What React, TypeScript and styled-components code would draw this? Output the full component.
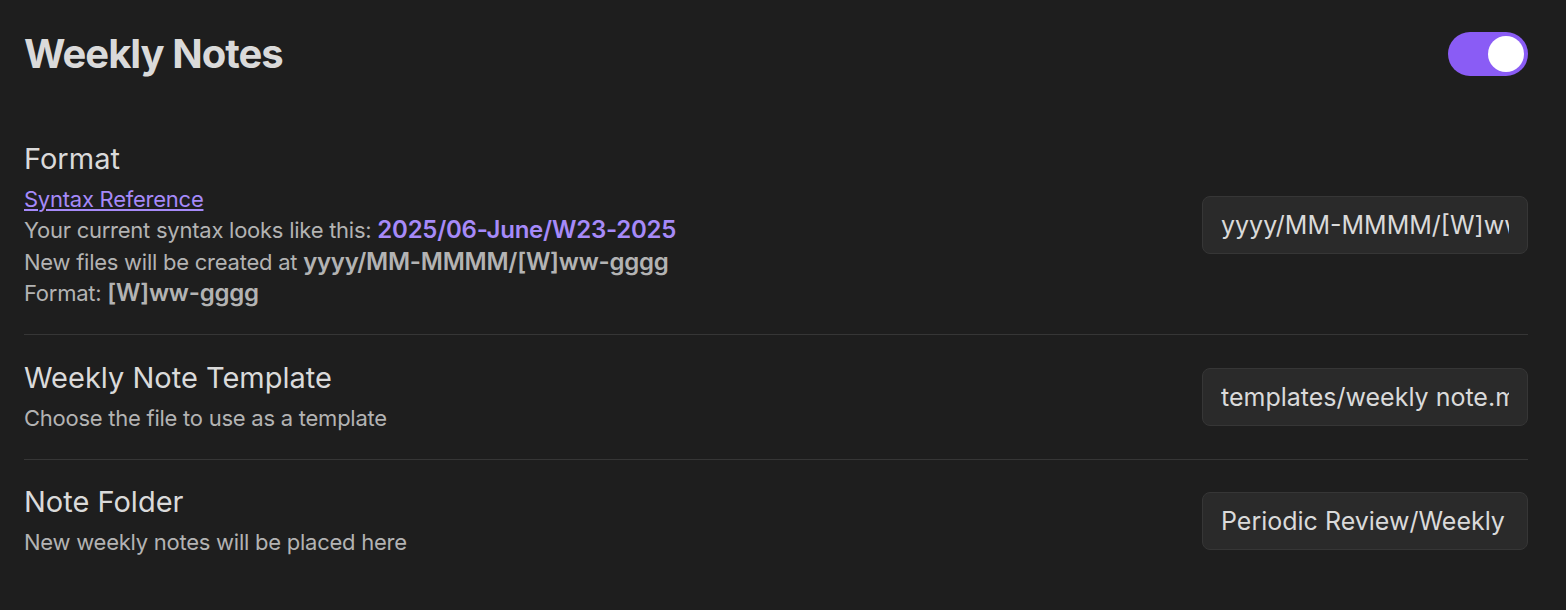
import React from 'react';
import styled, { createGlobalStyle } from 'styled-components';

const GlobalStyle = createGlobalStyle`
  html, body {
    margin: 0;
    padding: 0;
    background: #1e1e1e;
  }
  body {
    font-family: Inter, "Noto Sans", "Liberation Sans", sans-serif;
    color: #dadada;
    -webkit-font-smoothing: antialiased;
  }
`;

const Page = styled.div`
  width: 1566px;
  height: 610px;
  box-sizing: border-box;
  padding: 30px 38px 0 24px;
  background: #1e1e1e;
  overflow: hidden;
`;

const HeadingRow = styled.div`
  display: flex;
  align-items: center;
  justify-content: space-between;
  margin-bottom: 38px;
`;

const Heading = styled.h1`
  margin: 0;
  font-size: 40px;
  line-height: 48px;
  font-weight: 700;
  letter-spacing: -0.025em;
  color: #dadada;
`;

const Toggle = styled.div<{ on: boolean }>`
  width: 80px;
  height: 44px;
  border-radius: 22px;
  background: ${p => (p.on ? '#8a5cf5' : '#3f3f3f')};
  display: flex;
  align-items: center;
  justify-content: ${p => (p.on ? 'flex-end' : 'flex-start')};
  padding: 0 4px;
  box-sizing: border-box;
`;

const Knob = styled.div`
  width: 36px;
  height: 36px;
  border-radius: 50%;
  background: #ffffff;
`;

const Row = styled.div<{ divider?: boolean }>`
  display: flex;
  align-items: center;
  justify-content: space-between;
  gap: 24px;
  padding: 24.5px 0;
  border-top: ${p => (p.divider ? '1px solid #363636' : 'none')};
`;

const Info = styled.div`
  display: flex;
  flex-direction: column;
`;

const Name = styled.div`
  font-size: 29px;
  line-height: 36px;
  font-weight: 400;
  color: #dadada;
  margin-bottom: 7px;
`;

const Desc = styled.div`
  font-size: 22px;
  line-height: 31.5px;
  letter-spacing: -0.25px;
  color: #b3b3b3;
`;

const Link = styled.a`
  color: #a68af9;
  text-decoration: underline;
  text-underline-offset: 2px;
  cursor: pointer;
`;

const Strong = styled.b<{ accent?: boolean }>`
  font-size: 24px;
  line-height: 1;
  font-weight: 600;
  color: ${p => (p.accent ? '#a68af9' : '#b3b3b3')};
`;

const Field = styled.input`
  width: 326px;
  height: 58px;
  box-sizing: border-box;
  flex-shrink: 0;
  padding: 0 18px;
  border: 1px solid #363636;
  border-radius: 8px;
  background: #2a2a2a;
  color: #dadada;
  font-family: Inter, "Noto Sans", "Liberation Sans", sans-serif;
  font-size: 25px;
  outline: none;
`;

export default function App() {
  return (
    <>
      <GlobalStyle />
      <Page>
        <HeadingRow>
          <Heading>Weekly Notes</Heading>
          <Toggle on>
            <Knob />
          </Toggle>
        </HeadingRow>

        <Row>
          <Info>
            <Name>Format</Name>
            <Desc>
              <Link>Syntax Reference</Link>
              <br />
              Your current syntax looks like this: <Strong accent>2025/06-June/W23-2025</Strong>
              <br />
              New files will be created at <Strong>yyyy/MM-MMMM/[W]ww-gggg</Strong>
              <br />
              Format: <Strong>[W]ww-gggg</Strong>
            </Desc>
          </Info>
          <Field defaultValue="yyyy/MM-MMMM/[W]ww-gggg" />
        </Row>

        <Row divider>
          <Info>
            <Name>Weekly Note Template</Name>
            <Desc>Choose the file to use as a template</Desc>
          </Info>
          <Field defaultValue="templates/weekly note.md" />
        </Row>

        <Row divider>
          <Info>
            <Name>Note Folder</Name>
            <Desc>New weekly notes will be placed here</Desc>
          </Info>
          <Field defaultValue="Periodic Review/Weekly" />
        </Row>
      </Page>
    </>
  );
}
